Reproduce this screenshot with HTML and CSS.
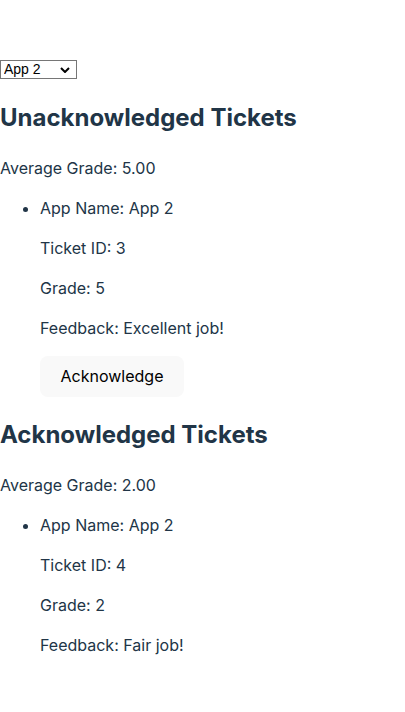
FILE: index.html
```html
<!DOCTYPE html>
<html>
<head>
<meta charset="utf-8">
<link rel="stylesheet" href="styles.css">
</head>
<body>
<div class="app">
  <div class="picker">
    <select class="app-select">
      <option>App 1</option>
      <option selected>App 2</option>
    </select>
  </div>
  <h2 class="section-title">Unacknowledged Tickets</h2>
  <p class="avg">Average Grade: 5.00</p>
  <ul class="tickets">
    <li>
      <p>App Name: App 2</p>
      <p>Ticket ID: 3</p>
      <p>Grade: 5</p>
      <p>Feedback: Excellent job!</p>
      <button class="ack-btn">Acknowledge</button>
    </li>
  </ul>
  <h2 class="section-title">Acknowledged Tickets</h2>
  <p class="avg">Average Grade: 2.00</p>
  <ul class="tickets">
    <li>
      <p>App Name: App 2</p>
      <p>Ticket ID: 4</p>
      <p>Grade: 2</p>
      <p>Feedback: Fair job!</p>
    </li>
  </ul>
</div>
</body>
</html>
```
FILE: styles.css
```css
html, body {
  margin: 0;
  padding: 0;
  background: #ffffff;
}
body {
  font-family: Inter, "Noto Sans", sans-serif;
  font-size: 16px;
  line-height: 1.5;
  color: #213547;
}
.app {
  padding-top: 60px;
}
.picker {
  height: 20px;
}
.app-select {
  display: block;
  -webkit-appearance: none;
  appearance: none;
  font-family: "Liberation Sans", Arial, sans-serif;
  font-size: 14px;
  line-height: 17px;
  width: 77px;
  height: 19px;
  margin: 0;
  color: #000;
  background-color: #fff;
  background-image: url("data:image/svg+xml;utf8,<svg xmlns='http://www.w3.org/2000/svg' width='10' height='6' viewBox='0 0 10 6'><path d='M1 1 L5 5 L9 1' fill='none' stroke='black' stroke-width='2'/></svg>");
  background-repeat: no-repeat;
  background-position: right 6px center;
  border: 1px solid #767676;
  border-radius: 0;
  padding: 0 0 0 3px;
}
.section-title {
  font-size: 24px;
  font-weight: 700;
  margin: 19.92px 0;
  line-height: 1.5;
}
p {
  margin: 16px 0;
}
.tickets {
  margin: 16px 0;
  padding-left: 40px;
}
.ack-btn {
  font-family: Inter, "Noto Sans", sans-serif;
  font-size: 16px;
  font-weight: 400;
  color: #000;
  background: #f9f9f9;
  border: 1px solid transparent;
  border-radius: 8px;
  padding: 9.6px 19.5px;
  line-height: normal;
  cursor: pointer;
}
```
